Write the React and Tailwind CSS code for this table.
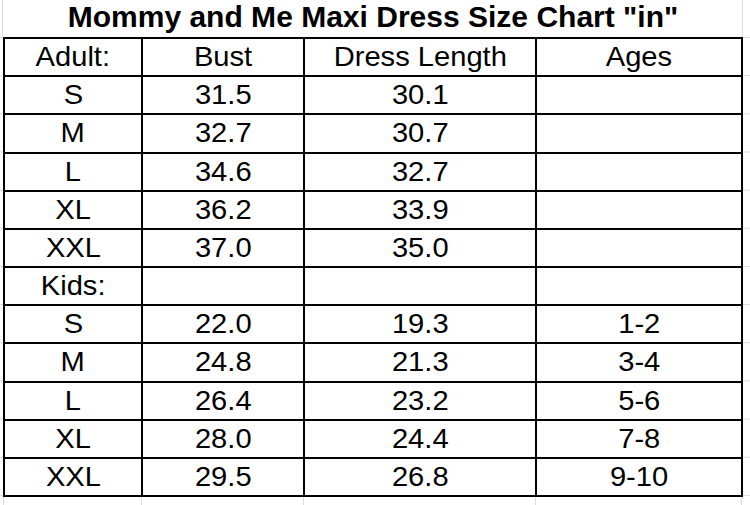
import React from "react";

const rows = [
    ["Adult:", "Bust", "Dress Length", "Ages"],
    ["S", "31.5", "30.1", ""],
    ["M", "32.7", "30.7", ""],
    ["L", "34.6", "32.7", ""],
    ["XL", "36.2", "33.9", ""],
    ["XXL", "37.0", "35.0", ""],
    ["Kids:", "", "", ""],
    ["S", "22.0", "19.3", "1-2"],
    ["M", "24.8", "21.3", "3-4"],
    ["L", "26.4", "23.2", "5-6"],
    ["XL", "28.0", "24.4", "7-8"],
    ["XXL", "29.5", "26.8", "9-10"],
];

function App() {
    return (
        <div
            className="w-[750px] h-[505px] overflow-hidden flex flex-col bg-white bg-[linear-gradient(#dcdcdc_1px,transparent_1px)] bg-[length:100%_38.17px] bg-[position:0_37px] text-black"
            style={{ fontFamily: '"Liberation Sans", Arial, sans-serif' }}
        >
            {/* title row, merged cell */}
            <div className="h-[37px] shrink-0 bg-white flex">
                <div className="w-[3px] border-r border-[#dcdcdc]"></div>
                <div className="w-[739px] flex items-center justify-center pb-[2px]">
                    <span className="inline-block font-bold text-[29px] leading-none scale-x-[1.035]">
                        Mommy and Me Maxi Dress Size Chart "in"
                    </span>
                </div>
                <div className="flex-1 border-l border-[#dcdcdc]"></div>
            </div>

            <div className="pl-[3px] shrink-0">
                <div className="w-[740px] h-[460px] bg-black p-[2px] grid grid-cols-[136px_160px_230px_204px] grid-rows-[repeat(12,1fr)] gap-[2px]">
                    {rows.map((row, i) =>
                        row.map((cell, j) => (
                            <div key={i + "-" + j} className="bg-white flex items-center justify-center">
                                <span className="inline-block text-[28px] leading-none scale-x-[1.04]">{cell}</span>
                            </div>
                        ))
                    )}
                </div>
            </div>

            {/* gridlines below the table */}
            <div className="flex-1 bg-white flex">
                <div className="w-[4px] border-r border-[#dcdcdc]"></div>
                <div className="w-[138px] border-r border-[#dcdcdc]"></div>
                <div className="w-[162px] border-r border-[#dcdcdc]"></div>
                <div className="w-[232px] border-r border-[#dcdcdc]"></div>
                <div className="w-[206px] border-r border-[#dcdcdc]"></div>
            </div>
        </div>
    );
}

export default App;
